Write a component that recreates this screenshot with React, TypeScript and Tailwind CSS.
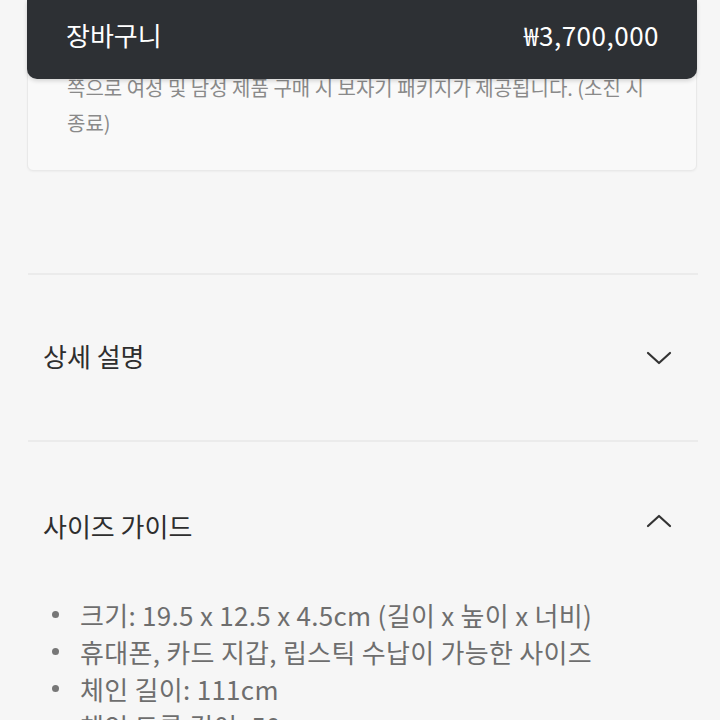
import React from "react";

const font = { fontFamily: '"Noto Sans CJK KR", "Noto Sans", sans-serif' };

function Chevron({ up }: { up?: boolean }) {
  return (
    <svg width="26" height="16" viewBox="0 0 26 16" fill="none" className="text-[#333]">
      <path
        d={up ? "M2 13 L13 3 L24 13" : "M2 3 L13 13 L24 3"}
        stroke="currentColor"
        strokeWidth="2.2"
        strokeLinecap="round"
        strokeLinejoin="round"
      />
    </svg>
  );
}

export default function App() {
  const bullets = [
    "크기: 19.5 x 12.5 x 4.5cm (길이 x 높이 x 너비)",
    "휴대폰, 카드 지갑, 립스틱 수납이 가능한 사이즈",
    "체인 길이: 111cm",
    "체인 드롭 길이: 50cm",
  ];
  return (
    <div className="relative w-[720px] h-[720px] overflow-hidden bg-[#f6f6f6]" style={font}>
      <div className="absolute top-0 left-[27px] right-[23px] h-[79px] bg-[#2d3034] rounded-b-[10px] flex items-center justify-between pl-[39px] pr-[38px] pb-[9px] z-10 shadow-[0_2px_4px_rgba(0,0,0,0.15)]">
        <span className="text-white text-[26px] leading-none">장바구니</span>
        <span className="text-white text-[26px] leading-none tracking-[0.5px]">₩3,700,000</span>
      </div>

      <div className="mx-[27px] mr-[23px] bg-[#f9f9f9] border border-[#e9e9e9] rounded-b-[6px] shadow-[0_1px_2px_rgba(0,0,0,0.04)] pl-[39px] pr-[20px] pt-[69px] pb-[30px] text-[20px] leading-[35px] text-[#8a8a8a]">
        <div className="whitespace-nowrap">쪽으로 여성 및 남성 제품 구매 시 보자기 패키지가 제공됩니다. (소진 시</div>
        <div className="whitespace-nowrap">종료)</div>
      </div>

      <div className="mx-[28px] mr-[22px] mt-[102px] border-t-[2px] border-[#ebebeb]">
        <div className="h-[165px] flex items-center justify-between pl-[15px] pr-[26px]">
          <span className="text-[26px] leading-none text-[#2e2e2e] -mt-[3px]">상세 설명</span>
          <Chevron />
        </div>
        <div className="border-t-[2px] border-[#ebebeb]" />
        <div className="h-[168px] flex items-start justify-between pl-[15px] pr-[26px] pt-[68px]">
          <span className="text-[26px] leading-[32px] text-[#2e2e2e]">사이즈 가이드</span>
          <div className="pt-[3px]">
            <Chevron up />
          </div>
        </div>
        <ul className="flex flex-col pl-[24px] -mt-[14px]">
          {bullets.map((b) => (
            <li key={b} className="flex items-center h-[37px] text-[26px] leading-none tracking-[0.3px] text-[#6e6e6e]">
              <span className="w-[7px] h-[7px] rounded-full bg-[#777] mr-[21px] shrink-0" />
              <span className="whitespace-nowrap">{b}</span>
            </li>
          ))}
        </ul>
      </div>
    </div>
  );
}
